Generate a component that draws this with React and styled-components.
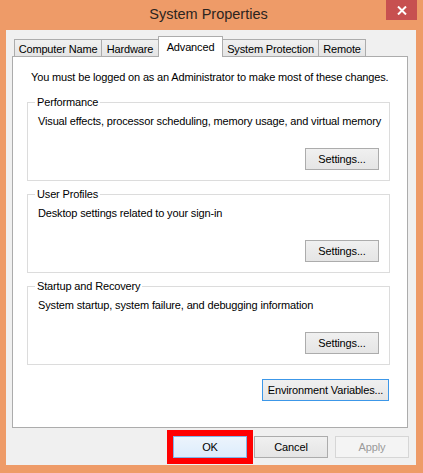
import React from 'react';
import styled, { createGlobalStyle } from 'styled-components';

const GlobalStyle = createGlobalStyle`
  html, body {
    margin: 0;
    padding: 0;
    background: #ee9b68;
  }
  body {
    font-family: "Liberation Sans", Arial, sans-serif;
    font-size: 11px;
    letter-spacing: -0.15px;
    color: #000;
  }
`;

// outer window with orange frame
const Window = styled.div`
  width: 423px;
  height: 473px;
  display: flex;
  flex-direction: column;
  background: #ee9b68;
  box-sizing: border-box;
  white-space: nowrap;
`;

const TitleBar = styled.div`
  height: 30px;
  display: grid;
  grid-template-columns: 1fr auto 1fr;
  padding-right: 6px;
`;

const Title = styled.div`
  grid-column: 2;
  font-size: 14.5px;
  letter-spacing: 0;
  line-height: 28px;
  color: #2b2420;
`;

const CloseButton = styled.button`
  grid-column: 3;
  justify-self: end;
  align-self: start;
  width: 31px;
  height: 20px;
  border: none;
  padding: 0;
  background: #c75050;
  display: flex;
  align-items: center;
  justify-content: center;
`;

const Client = styled.div`
  margin: 0 7px 8px 6px;
  flex: 1;
  background: #f0f0f0;
  display: flex;
  flex-direction: column;
  padding: 7px 8px 0 6px;
`;

const TabStrip = styled.div`
  display: flex;
  align-items: flex-end;
  height: 20px;
  padding-left: 2px;
  margin-bottom: -1px;
  position: relative;
  z-index: 1;
`;

const Tab = styled.div`
  box-sizing: border-box;
  width: ${(p) => p.$w}px;
  height: ${(p) => (p.$active ? 21 : 18)}px;
  margin-left: -1px;
  border: 1px solid #acacac;
  border-bottom: ${(p) => (p.$active ? 'none' : '1px solid #acacac')};
  background: ${(p) => (p.$active ? '#fff' : 'linear-gradient(#f0f0f0, #e5e5e5)')};
  display: flex;
  align-items: center;
  justify-content: center;
  padding-top: ${(p) => (p.$active ? 0 : 1)}px;
  position: relative;
  z-index: ${(p) => (p.$active ? 2 : 1)};

  &:first-child {
    margin-left: 0;
  }
`;

const Panel = styled.div`
  height: 372px;
  box-sizing: border-box;
  border: 1px solid #acacac;
  background: #fff;
  display: flex;
  flex-direction: column;
  padding: 13px 17px 0 14px;
`;

const Notice = styled.div`
  line-height: 15px;
  padding-left: 4px;
  margin-bottom: 17px;
`;

const Group = styled.div`
  position: relative;
  border: 1px solid #dcdcdc;
  display: flex;
  flex-direction: column;
  padding: 11px 10px 10px 9px;
  margin-bottom: 13px;
`;

const GroupLabel = styled.span`
  position: absolute;
  top: -8px;
  left: 7px;
  padding: 0 2px;
  background: #fff;
  line-height: 15px;
`;

const Desc = styled.div`
  line-height: 15px;
  padding-left: 1px;
`;

const Button = styled.button`
  box-sizing: border-box;
  width: ${(p) => p.$w || 74}px;
  height: 22px;
  font-family: inherit;
  font-size: 11px;
  letter-spacing: -0.15px;
  color: ${(p) => (p.$disabled ? '#9a9a9a' : '#000')};
  padding: 0;
  border: 1px solid ${(p) => (p.$focus ? '#3c97e8' : p.$default ? '#7fb5ea' : p.$disabled ? '#d6d6d6' : '#acacac')};
  background: ${(p) =>
    p.$default
      ? 'linear-gradient(#ecf4fc, #dcecfc)'
      : p.$disabled
      ? '#f4f4f4'
      : 'linear-gradient(#f0f0f0, #e5e5e5)'};
  outline: ${(p) => (p.$marked ? '6px solid #ff0000' : 'none')};
  outline-offset: 0;
`;

const GroupButton = styled(Button)`
  align-self: flex-end;
  margin-top: 19px;
`;

const EnvButton = styled(Button)`
  align-self: flex-end;
  margin-top: 1px;
  margin-right: 1px;
`;

const ButtonRow = styled.div`
  display: flex;
  justify-content: flex-end;
  gap: 7px;
  margin-top: 8px;
  margin-right: -1px;
`;

const tabs = [
  { label: 'Computer Name', w: 88 },
  { label: 'Hardware', w: 58 },
  { label: 'Advanced', w: 65, active: true },
  { label: 'System Protection', w: 97 },
  { label: 'Remote', w: 48 },
];

const groups = [
  { title: 'Performance', desc: 'Visual effects, processor scheduling, memory usage, and virtual memory' },
  { title: 'User Profiles', desc: 'Desktop settings related to your sign-in' },
  { title: 'Startup and Recovery', desc: 'System startup, system failure, and debugging information' },
];

export default function App() {
  return (
    <>
      <GlobalStyle />
      <Window>
        <TitleBar>
          <Title>System Properties</Title>
          <CloseButton aria-label="Close">
            <svg width="10" height="9" viewBox="0 0 10 9">
              <path d="M1 0.5 L9 8.5 M9 0.5 L1 8.5" stroke="#fff" strokeWidth="2" />
            </svg>
          </CloseButton>
        </TitleBar>
        <Client>
          <TabStrip>
            {tabs.map((t) => (
              <Tab key={t.label} $w={t.w} $active={t.active}>
                {t.label}
              </Tab>
            ))}
          </TabStrip>
          <Panel>
            <Notice>You must be logged on as an Administrator to make most of these changes.</Notice>
            {groups.map((g) => (
              <Group key={g.title}>
                <GroupLabel>{g.title}</GroupLabel>
                <Desc>{g.desc}</Desc>
                <GroupButton>Settings...</GroupButton>
              </Group>
            ))}
            <EnvButton $w={127} $focus>Environment Variables...</EnvButton>
          </Panel>
          <ButtonRow>
            <Button $default $marked>OK</Button>
            <Button>Cancel</Button>
            <Button $disabled>Apply</Button>
          </ButtonRow>
        </Client>
      </Window>
    </>
  );
}
